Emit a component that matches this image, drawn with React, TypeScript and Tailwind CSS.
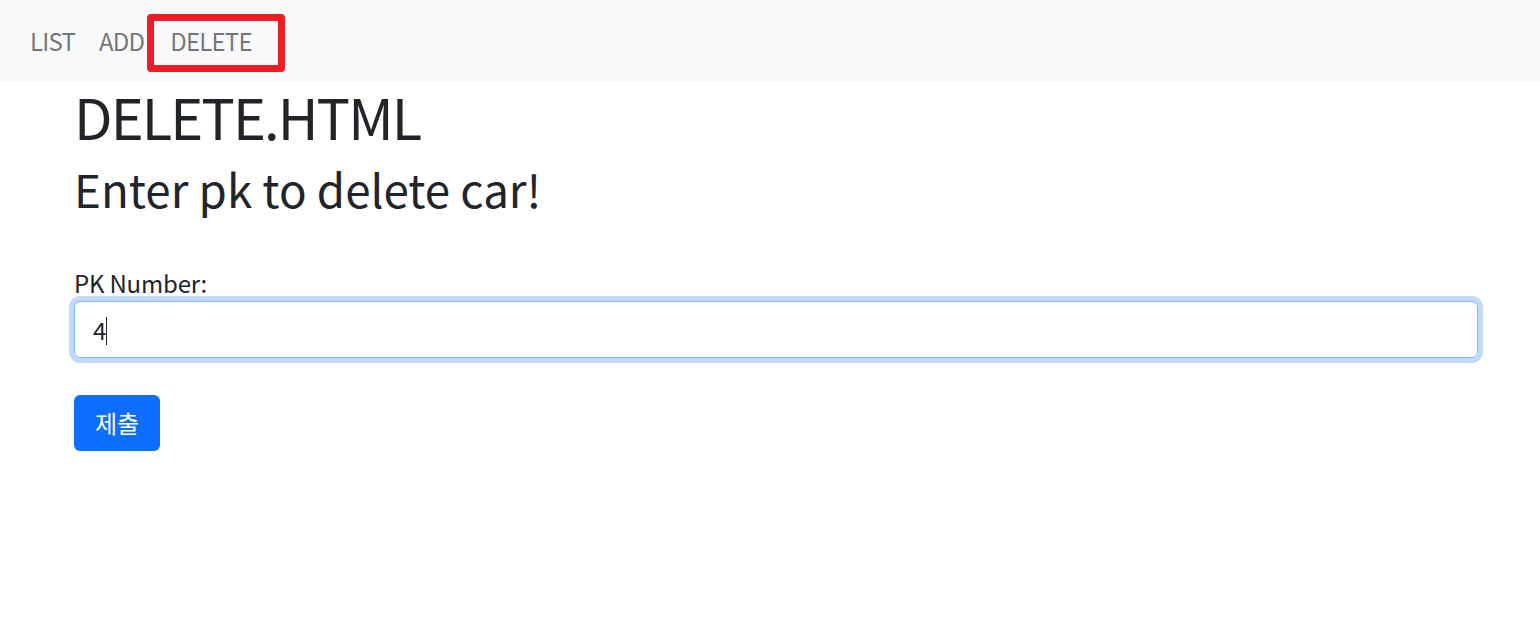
import React from 'react';

export default function App() {
  return (
    <div className="min-h-[622px] bg-white text-[#212529] font-['Noto_Sans_CJK_KR','Noto_Sans',sans-serif]">
      {/* Navbar */}
      <nav className="relative h-[82px] bg-[#f8f9fa] flex items-center px-[18px]">
        <ul className="flex items-center text-[24px] leading-[36px] text-black/55 tracking-[-0.8px]">
          <li className="px-[12px]">LIST</li>
          <li className="px-[12px]">ADD</li>
          <li className="pl-[14px] pr-[12px]">DELETE</li>
        </ul>
        <div className="absolute left-[147px] top-[14px] w-[138px] h-[58px] border-[7px] border-[#ee1c25] rounded-[4px]" />
      </nav>

      <main className="pl-[74px] pr-[62px]">
        <h1 className="text-[56px] leading-[67px] font-normal tracking-[-1.9px] mb-[12px]">DELETE.HTML</h1>
        <h2 className="text-[45.7px] leading-[55px] font-normal">Enter pk to delete car!</h2>

        <form className="mt-[49px]">
          <label className="block text-[24px] leading-[36px] tracking-[-0.2px]">PK Number:</label>
          <div className="relative">
            <input
              type="text"
              defaultValue="4"
              className="w-full h-[57px] px-[18px] text-[24px] leading-[36px] text-[#212529] border border-[#86b7fe] rounded-[6px] outline-none ring-[5px] ring-[#c3dafe] bg-white"
            />
            {/* text caret */}
            <span className="absolute left-[32px] top-[16px] w-px h-[28px] bg-[#212529]" />
          </div>
          <button
            type="button"
            className="mt-[37px] h-[56px] px-[21px] bg-[#0d6efd] text-white text-[24px] leading-[36px] rounded-[6px]"
          >
            제출
          </button>
        </form>
      </main>
    </div>
  );
}
